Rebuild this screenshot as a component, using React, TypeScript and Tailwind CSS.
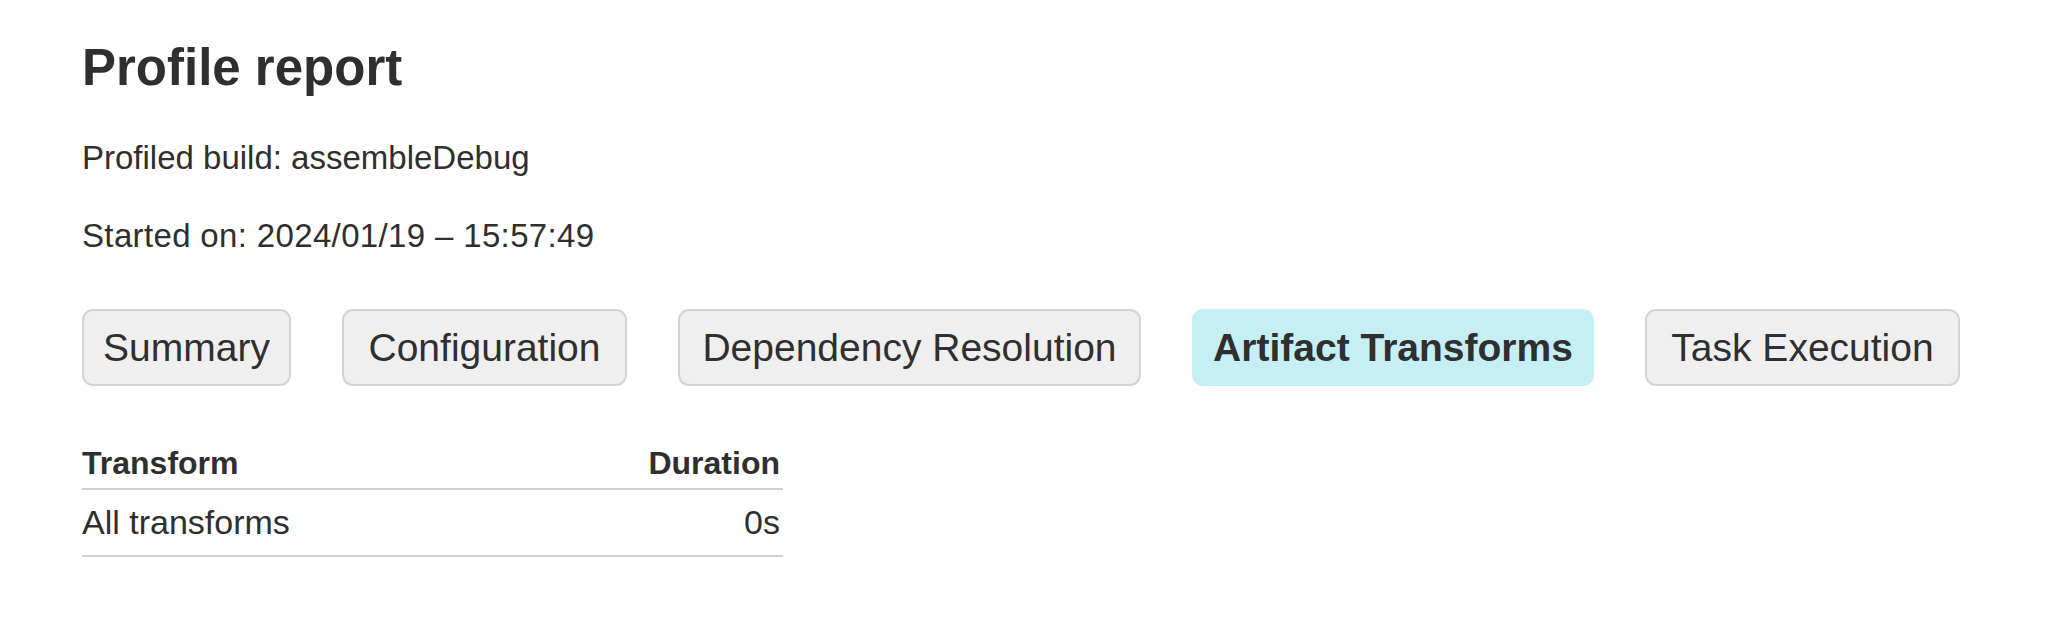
import React from "react";

const tabs = [
  { label: "Summary", width: "w-[209px]", active: false },
  { label: "Configuration", width: "w-[285px]", active: false },
  { label: "Dependency Resolution", width: "w-[463px]", active: false },
  { label: "Artifact Transforms", width: "w-[402px]", active: true },
  { label: "Task Execution", width: "w-[315px]", active: false },
];

function TabButton({
  label,
  width,
  active,
}: {
  label: string;
  width: string;
  active: boolean;
}) {
  return (
    <button
      type="button"
      className={
        active
          ? `${width} h-[77px] rounded-[11px] border-2 border-[#c6eff5] bg-[#c6eff5] text-center text-[39px] font-bold leading-[45px] text-[#2f2f2f]`
          : `${width} h-[77px] rounded-[11px] border-2 border-[#d3d3d3] bg-[#efefef] text-center text-[39px] leading-[45px] text-[#2f2f2f]`
      }
    >
      {label}
    </button>
  );
}

export default function App() {
  return (
    <div
      className="min-h-[622px] w-full bg-white px-[82px] pt-[43px] text-[#2f2f2f]"
      style={{ fontFamily: '"Liberation Sans", Arial, sans-serif' }}
    >
      <h1 className="text-[51px] font-bold leading-[50px]">Profile report</h1>
      <p className="mt-[48px] text-[33px] leading-[33px]">
        Profiled build: assembleDebug
      </p>
      <p className="mt-[45px] text-[33px] leading-[33px] tracking-[0.35px]">
        Started on: 2024/01/19 – 15:57:49
      </p>

      <div className="mt-[57px] flex gap-[51px]">
        {tabs.map((tab) => (
          <TabButton
            key={tab.label}
            label={tab.label}
            width={tab.width}
            active={tab.active}
          />
        ))}
      </div>

      <table className="mt-[62px] w-[701px] border-collapse">
        <thead>
          <tr className="border-b-2 border-[#cfcfcf]">
            <th className="pb-[9px] text-left text-[32px] font-bold leading-[31px]">
              Transform
            </th>
            <th className="pb-[9px] pr-[3px] text-right text-[32px] font-bold leading-[31px]">
              Duration
            </th>
          </tr>
        </thead>
        <tbody>
          <tr className="border-b-2 border-[#cfcfcf]">
            <td className="pt-[16px] pb-[16px] text-[34px] leading-[33px]">
              All transforms
            </td>
            <td className="pt-[16px] pb-[16px] pr-[3px] text-right text-[34px] leading-[33px]">
              0s
            </td>
          </tr>
        </tbody>
      </table>
    </div>
  );
}
